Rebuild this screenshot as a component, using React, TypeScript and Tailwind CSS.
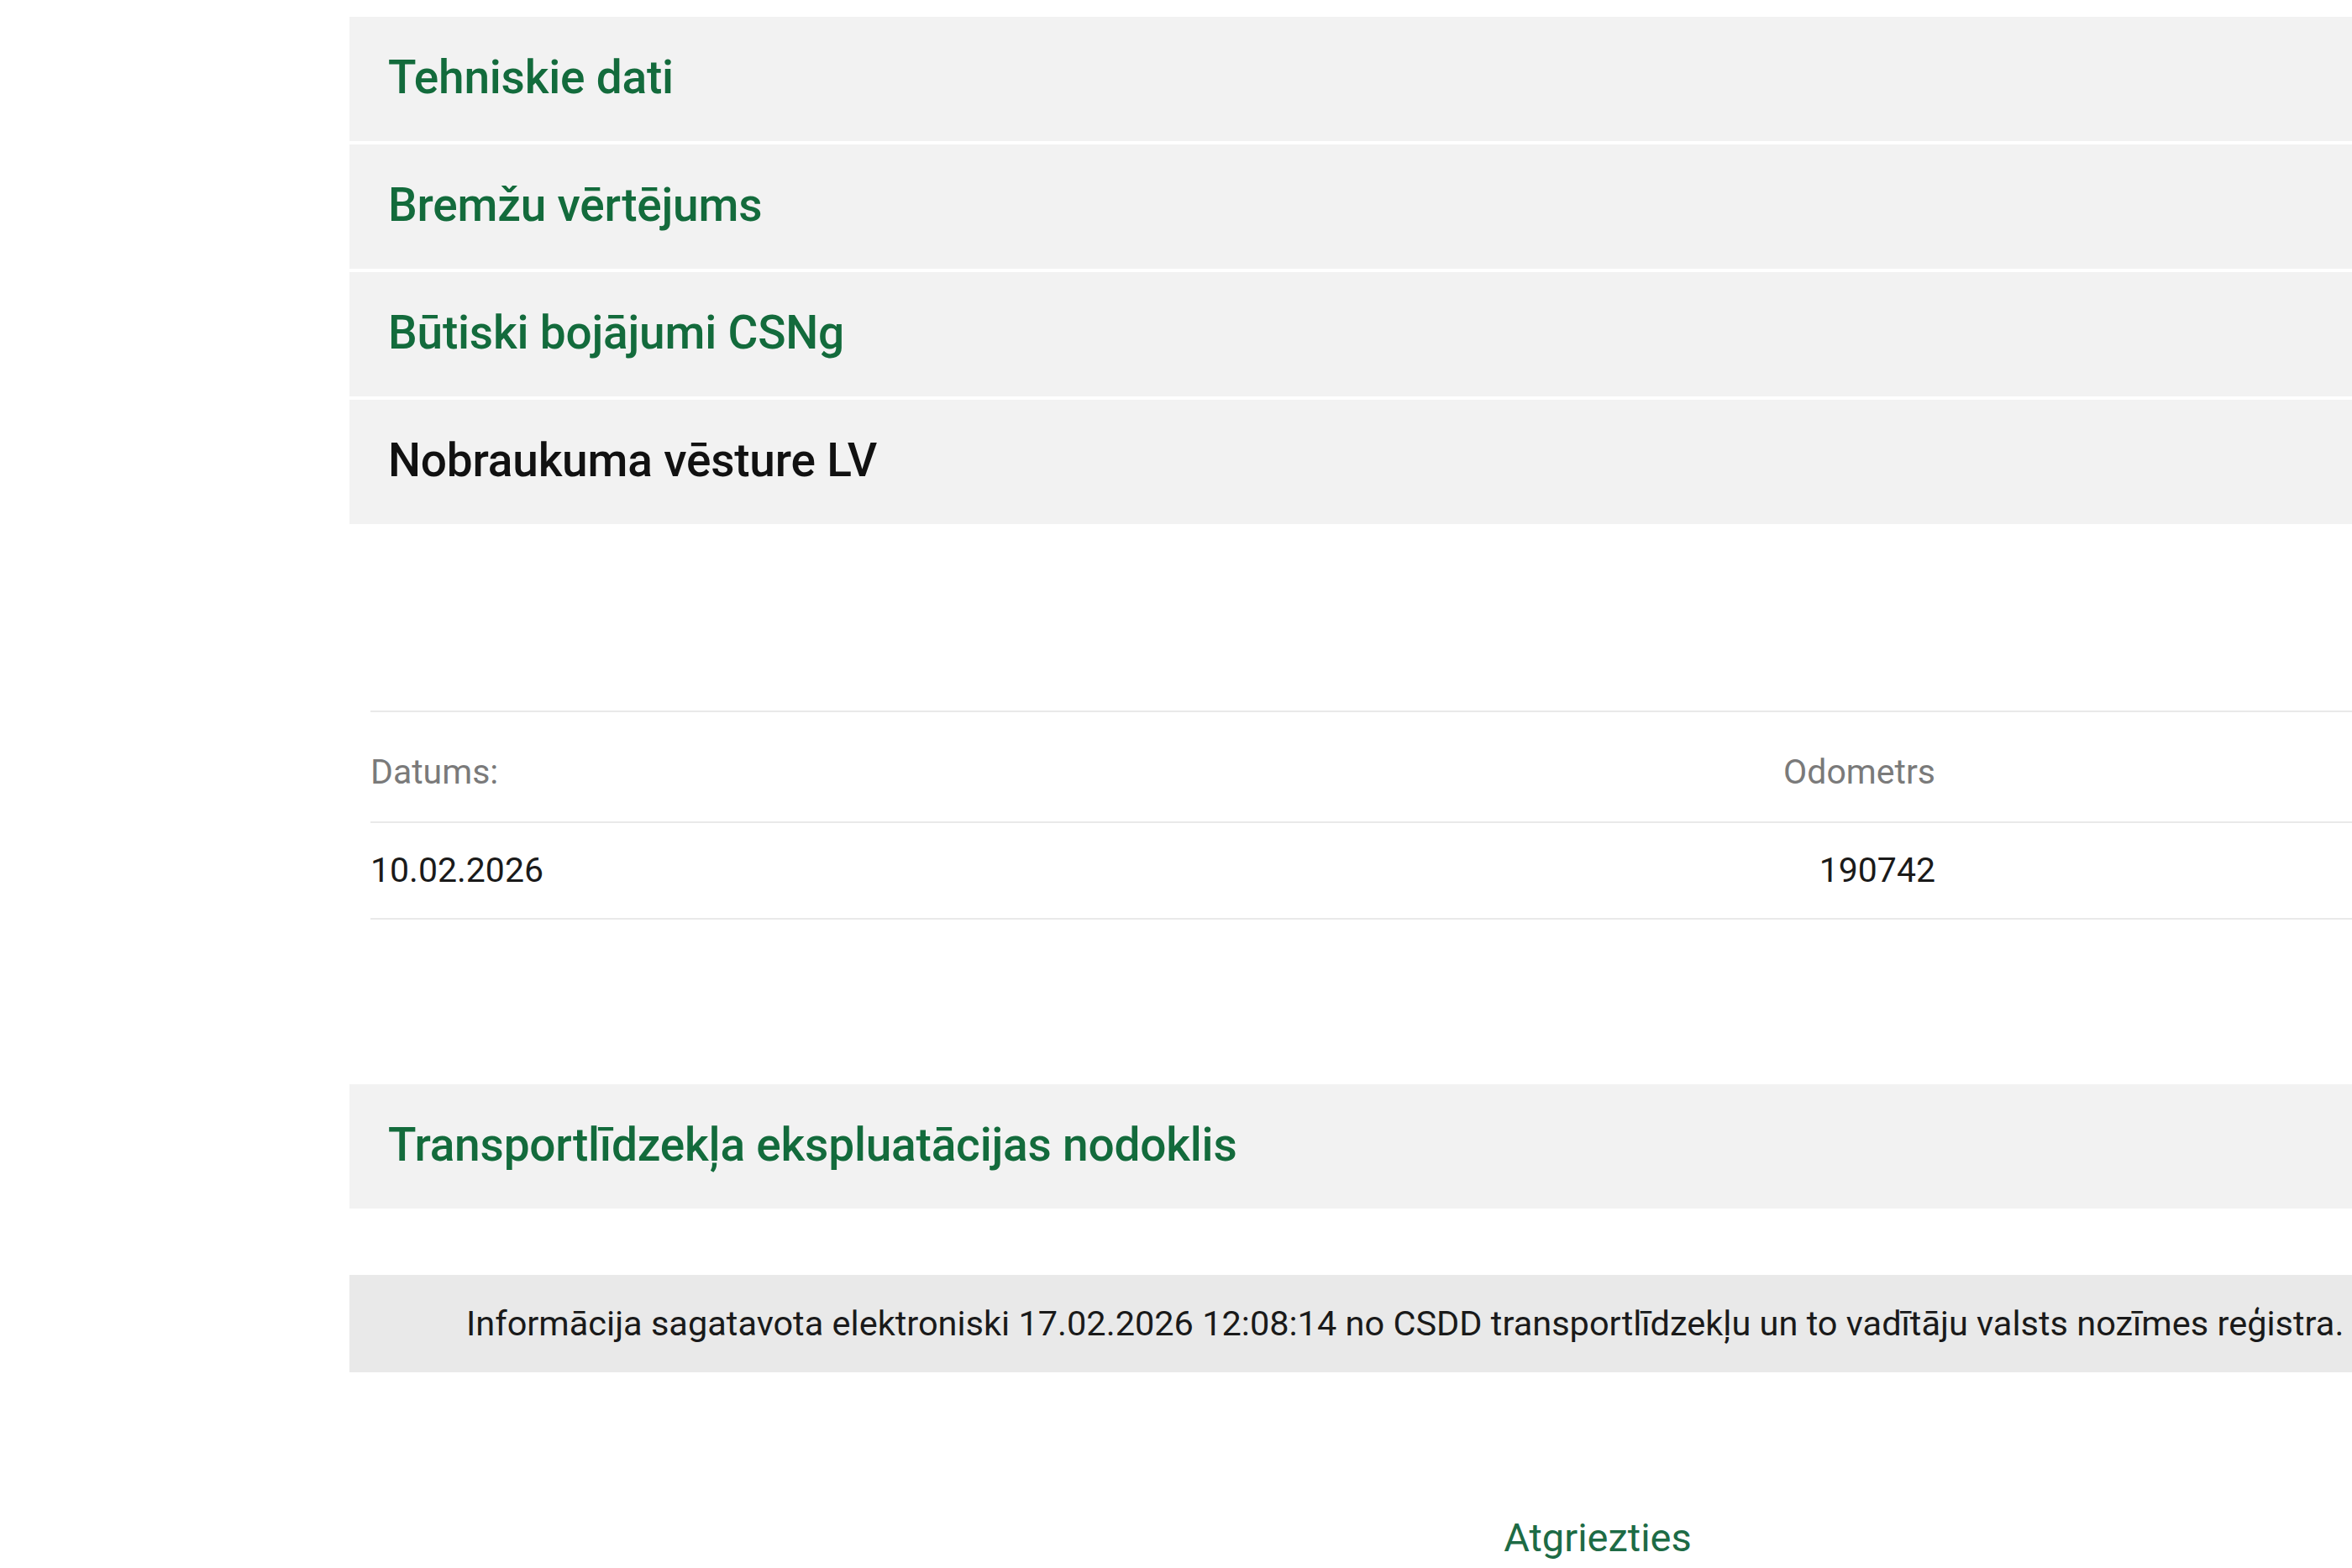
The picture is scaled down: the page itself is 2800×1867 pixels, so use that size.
import React from 'react';

const sections = [
  { title: 'Tehniskie dati', active: false },
  { title: 'Bremžu vērtējums', active: false },
  { title: 'Būtiski bojājumi CSNg', active: false },
  { title: 'Nobraukuma vēsture LV', active: true },
];

function SectionHeader({ title, active }: { title: string; active?: boolean }) {
  return (
    <div
      className={`flex h-[148px] items-center bg-[#f2f2f2] pb-[4px] pl-[46px] text-[55px] font-medium tracking-[-0.2px] ${
        active ? 'text-[#111111]' : 'text-[#136b3c]'
      }`}
    >
      {title}
    </div>
  );
}

export default function App() {
  return (
    <div className="h-[1867px] w-[2800px] overflow-hidden bg-white font-['Roboto',sans-serif]">
      <div className="ml-[416px] w-[2972px] pt-[20px]">
        {/* Accordion sections */}
        <div className="flex flex-col gap-[4px]">
          {sections.map((s) => (
            <SectionHeader key={s.title} title={s.title} active={s.active} />
          ))}
        </div>

        {/* Mileage table */}
        <div className="ml-[25px] mt-[222px] border-t-2 border-[#e9e9e9]">
          <div className="flex h-[132px] items-center border-b-2 border-[#e9e9e9] pt-[14px] text-[41px] text-[#7a7a7a]">
            <div className="w-[1633px]">Datums:</div>
            <div className="w-[230px] text-right">Odometrs</div>
          </div>
          <div className="flex h-[115px] items-center border-b-2 border-[#e9e9e9] text-[41px] text-[#1a1a1a]">
            <div className="w-[1633px]">10.02.2026</div>
            <div className="w-[230px] text-right">190742</div>
          </div>
        </div>

        <div className="mt-[196px]">
          <SectionHeader title="Transportlīdzekļa ekspluatācijas nodoklis" />
        </div>

        {/* Info bar */}
        <div className="mt-[79px] flex h-[116px] items-center whitespace-nowrap bg-[#e9e9e9] pl-[139px] text-[41.5px] text-[#1a1a1a]">
          Informācija sagatavota elektroniski 17.02.2026 12:08:14 no CSDD transportlīdzekļu un to vadītāju valsts nozīmes reģistra.
        </div>

        <div className="mt-[162px] flex justify-center">
          <a className="text-[47px] text-[#1d6b45]">Atgriezties</a>
        </div>
      </div>
    </div>
  );
}
